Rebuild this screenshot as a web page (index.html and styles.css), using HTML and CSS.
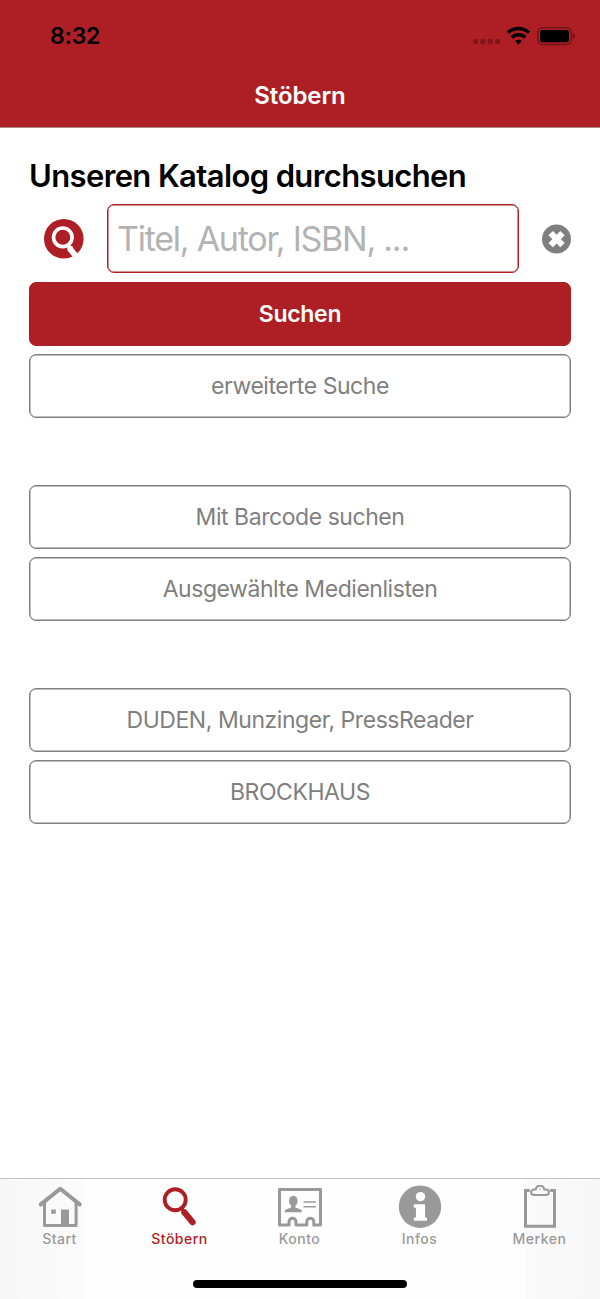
FILE: index.html
```html
<!DOCTYPE html>
<html lang="de">
<head>
    <meta charset="UTF-8">
    <title>Stöbern</title>
    <link rel="stylesheet" href="styles.css">
</head>
<body>
    <header class="header">
        <div class="status-bar">
            <span class="time">8:32</span>
            <svg class="status-icons" width="104" height="20" viewBox="0 0 104 20">
                <g fill="#801519">
                    <rect x="1" y="13" width="5" height="5" rx="1.5"/>
                    <rect x="8.3" y="13" width="5" height="5" rx="1.5"/>
                    <rect x="15.7" y="13" width="5" height="5" rx="1.5"/>
                    <rect x="23" y="13" width="5" height="5" rx="1.5"/>
                </g>
                <g fill="none" stroke="#000" stroke-width="3.5">
                    <path d="M36 6.800a15.200 15.200 0 0 1 21 0"/>
                    <path d="M39.8 11.400a9.6 9.6 0 0 1 13.4 0"/>
                </g>
                <path d="M43.2 15.1a5 5 0 0 1 6.6 0l-3.3 3.4z"/>
                <rect x="65.8" y="1.8" width="33.6" height="16.6" rx="4.6" fill="none" stroke="#70151a" stroke-width="1.5"/>
                <rect x="68" y="4" width="29" height="12.2" rx="2.3"/>
                <path d="M101 7.2c2.6.8 2.6 5 0 5.8z" fill="#70151a"/>
            </svg>
        </div>
        <h1>Stöbern</h1>
    </header>

    <main class="content">
        <h2>Unseren Katalog durchsuchen</h2>
        <form class="search-form">
            <div class="search-row">
                <svg class="search-icon" width="40" height="40" viewBox="0 0 40 40">
                    <circle cx="19.8" cy="19.8" r="19.8" fill="#ad1f24"/>
                    <circle cx="18.8" cy="18.3" r="9.3" fill="none" stroke="#fff" stroke-width="3.6"/>
                    <path d="M24 25l1.500 2" fill="none" stroke="#fff" stroke-width="2.500"/>
                    <path d="M25.8 29.500l7.600 9.600" fill="none" stroke="#fff" stroke-width="5.800"/>
                    <circle cx="26.200" cy="29.700" r="2.900" fill="#fff"/>
                </svg>
                <input type="text" class="search-input" placeholder="Titel, Autor, ISBN, ...">
                <svg class="clear-icon" width="29" height="30" viewBox="0 0 29 30">
                    <circle cx="14.500" cy="15" r="14.5" fill="#7f7f7f"/>
                    <path d="M8.700 9.200l11.800 12M20.500 9.200l-11.800 12" stroke="#fff" stroke-width="6.200"/>
                </svg>
            </div>
            <button type="button" class="btn btn-primary">Suchen</button>
            <button type="button" class="btn">erweiterte Suche</button>
        </form>
        <div class="btn-group">
            <button type="button" class="btn">Mit Barcode suchen</button>
            <button type="button" class="btn">Ausgewählte Medienlisten</button>
        </div>
        <div class="btn-group">
            <button type="button" class="btn">DUDEN, Munzinger, PressReader</button>
            <button type="button" class="btn">BROCKHAUS</button>
        </div>
    </main>

    <footer class="footer">
        <nav class="tab-bar">
            <div class="tab">
                <svg width="46" height="46" viewBox="0 0 46 46">
                    <path d="M3.8 19.400L23.300 3.700l19.400 15.700" fill="none" stroke="#999" stroke-width="4" stroke-linecap="round" stroke-linejoin="round"/>
                    <path d="M7.5 17v23.500h31.600V17" fill="none" stroke="#999" stroke-width="3" stroke-linejoin="round"/>
                    <path d="M14.200 24.5h4.6v4.2h-4.600zM24 24.5h8V41h-8z" fill="#999"/>
                </svg>
                <span>Start</span>
            </div>
            <div class="tab active">
                <svg width="46" height="46" viewBox="0 0 46 46">
                    <circle cx="18.2" cy="14.7" r="10.500" fill="none" stroke="#ad1f24" stroke-width="3.900"/>
                    <path d="M24.500 23l3 4" stroke="#ad1f24" stroke-width="3"/>
                    <path d="M27.300 27.300l8.300 9.900" stroke="#ad1f24" stroke-width="6.200" stroke-linecap="round"/>
                </svg>
                <span>Stöbern</span>
            </div>
            <div class="tab">
                <svg class="icon-konto" width="46" height="46" viewBox="0 0 46 46">
                    <path d="M2.5 4.5h41v35.4h-6.700v-3.200a3.500 3.500 0 0 0-7 0v3.200H19v-3.200a3.500 3.500 0 0 0-7 0v3.200H2.500z" fill="none" stroke="#999" stroke-width="3" stroke-linejoin="round"/>
                    <ellipse cx="16.300" cy="16" rx="4.300" ry="5.300" fill="#999"/>
                    <path d="M14.200 20h4.200v2.500l5.200 2c1 .5 1.300 1.400 1.300 2.700H7.700c0-1.300.3-2.200 1.300-2.700l5.200-2z" fill="#999"/>
                    <path d="M26.500 17h12.300M26.500 21.800h12.300" stroke="#999" stroke-width="1.500"/>
                </svg>
                <span>Konto</span>
            </div>
            <div class="tab">
                <svg class="icon-infos" width="46" height="46" viewBox="0 0 46 46">
                    <circle cx="23" cy="21.700" r="21.200" fill="#999"/>
                    <circle cx="23.500" cy="11.600" r="4.700" fill="#fff"/>
                    <path d="M17.500 20h9.800v13.200h2v1.800H17.500v-1.800h2.200V22h-2.200z" fill="#fff" stroke="#fff" stroke-width="1.500" stroke-linejoin="round"/>
                </svg>
                <span>Infos</span>
            </div>
            <div class="tab">
                <svg width="46" height="46" viewBox="0 0 46 46">
                    <path d="M12.800 5.500H8.500v35.700h29V5.500h-4.300" fill="none" stroke="#999" stroke-width="3"/>
                    <path d="M17.200 4.600h1.500c.8-5.200 7.800-5.200 8.600 0h1.500c4.200 0 4.200 5.400 0 5.400H17.200c-4.200 0-4.200-5.400 0-5.400z" fill="none" stroke="#999" stroke-width="2"/>
                    <circle cx="23" cy="4" r=".8" fill="#999"/>
                </svg>
                <span>Merken</span>
            </div>
        </nav>
        <div class="home-indicator"></div>
    </footer>
</body>
</html>
```
FILE: styles.css
```css
* {
    box-sizing: border-box;
    margin: 0;
    padding: 0;
}

body {
    font-family: Inter, "Liberation Sans", sans-serif;
    background-color: #fff;
    color: #000;
    height: 1299px;
    display: flex;
    flex-direction: column;
}

.header {
    background-color: #ad1f24;
    height: 128px;
    border-bottom: 1px solid #b08a8b;
}

.status-bar {
    display: flex;
    justify-content: space-between;
    align-items: center;
    height: 72px;
    padding: 0 24px 0 50px;
}

.time {
    font-size: 23px;
    font-weight: 600;
    letter-spacing: -0.2px;
}

h1 {
    color: #fff;
    font-size: 24px;
    font-weight: 600;
    line-height: 48px;
    text-align: center;
    letter-spacing: -0.1px;
}

.content {
    flex: 1;
    padding: 28px 29px 0;
}

h2 {
    font-size: 31px;
    font-weight: 600;
    line-height: 40px;
    letter-spacing: -0.62px;
    margin-bottom: 8px;
    white-space: nowrap;
}

.search-form,
.btn-group {
    display: flex;
    flex-direction: column;
    gap: 8.7px;
}

.search-row {
    display: flex;
    align-items: center;
    height: 69.3px;
}

.search-icon {
    margin: 0 23px 0 15px;
    flex: none;
}

.search-input {
    width: 412px;
    height: 69px;
    border: 1px solid #ad1f24;
    box-shadow: inset 0 0 0 0.5px #ad1f24;
    border-radius: 7px;
    padding: 0 9px;
    font-family: inherit;
    font-size: 34px;
    letter-spacing: -1.25px;
    outline: none;
}

.search-input::placeholder {
    color: #b3b3b3;
}

.clear-icon {
    margin-left: auto;
    flex: none;
}

.btn {
    height: 63.8px;
    border: 1px solid #7f7f7f;
    box-shadow: inset 0 0 0 0.5px #7f7f7f;
    border-radius: 7px;
    background-color: #fff;
    color: #7f7f7f;
    font-family: inherit;
    font-size: 23px;
    letter-spacing: -0.45px;
}

.btn-primary {
    background-color: #ad1f24;
    border-color: #ad1f24;
    box-shadow: none;
    color: #fff;
    font-weight: 600;
    letter-spacing: -0.3px;
}

.btn-group {
    margin-top: 66.6px;
}

.footer {
    height: 121px;
    border-top: 1px solid #c4c4c4;
    background: linear-gradient(90deg, #f7f7f7, #fbfbfb 13.9%, #fefefe 14%, #fefefe 87.5%, #fafafa 87.6%, #f7f7f7);
}

.tab-bar {
    display: flex;
}

.tab {
    flex: 1;
    display: flex;
    flex-direction: column;
    align-items: center;
    padding: 6px 1px 0 0;
    color: #999;
    font-size: 14px;
    font-weight: 500;
    letter-spacing: 0.5px;
    line-height: 15px;
}

.tab.active {
    color: #ad1f24;
}

.home-indicator {
    width: 214px;
    height: 7.5px;
    border-radius: 4px;
    background-color: #000;
    margin: 34px auto 0;
}
```
